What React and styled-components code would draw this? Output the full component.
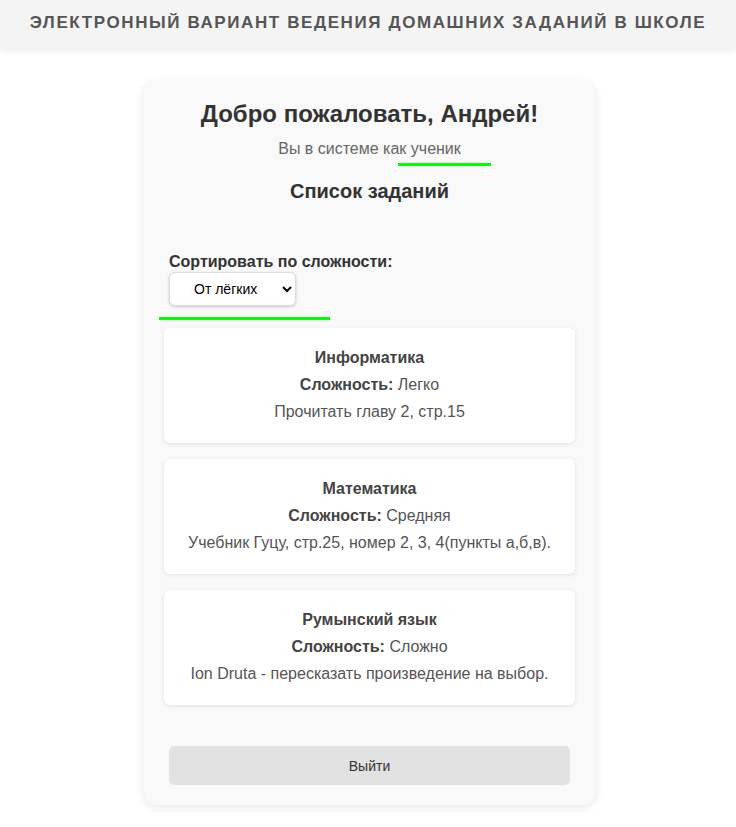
import React, { useState } from 'react';
import styled, { createGlobalStyle } from 'styled-components';

const tasks = [
  { subject: 'Информатика', level: 'Легко', text: 'Прочитать главу 2, стр.15' },
  { subject: 'Математика', level: 'Средняя', text: 'Учебник Гуцу, стр.25, номер 2, 3, 4(пункты а,б,в).' },
  { subject: 'Румынский язык', level: 'Сложно', text: 'Ion Druta - пересказать произведение на выбор.' },
];

const App = () => {
  const [order, setOrder] = useState('easy');

  return (
    <>
      <GlobalStyle />
      <Header>
        <HeaderTitle>Электронный вариант ведения домашних заданий в школе</HeaderTitle>
      </Header>
      <Main>
        <Panel>
          <Welcome>Добро пожаловать, Андрей!</Welcome>
          <Role>Вы в системе как ученик</Role>
          <ListTitle>Список заданий</ListTitle>
          <SortBox>
            <SortLabel htmlFor="sort">Сортировать по сложности:</SortLabel>
            <SortSelect id="sort" value={order} onChange={(e) => setOrder(e.target.value)}>
              <option value="easy">От лёгких</option>
              <option value="hard">От сложных</option>
            </SortSelect>
          </SortBox>
          <TaskList>
            {tasks.map((t) => (
              <TaskCard key={t.subject}>
                <TaskSubject>{t.subject}</TaskSubject>
                <TaskLine>
                  <b>Сложность:</b> {t.level}
                </TaskLine>
                <TaskLine>{t.text}</TaskLine>
              </TaskCard>
            ))}
          </TaskList>
          <LogoutButton>Выйти</LogoutButton>
          <Marker $left={254} $top={82} $width={93} />
          <Marker $left={15} $top={236} $width={171} />
        </Panel>
      </Main>
    </>
  );
};

export default App;

const GlobalStyle = createGlobalStyle`
  body {
    margin: 0;
    background: #fff;
    font-family: "Liberation Sans", Arial, sans-serif;
    color: #333;
  }
`;

const Header = styled.header`
  height: 49px;
  background: #f4f4f4;
  box-shadow: 0 2px 6px rgba(0, 0, 0, 0.08);
  display: flex;
  align-items: center;
  justify-content: center;
`;

const HeaderTitle = styled.h1`
  margin: 0 0 3px;
  font-size: 17px;
  font-weight: bold;
  text-transform: uppercase;
  letter-spacing: 1.6px;
  color: #555;
`;

const Main = styled.main`
  display: flex;
  justify-content: center;
  padding: 32px 0 20px 3px;
`;

const Panel = styled.section`
  position: relative;
  width: 451px;
  box-sizing: border-box;
  padding: 19px 20px 20px;
  background: #f9f9f9;
  border-radius: 12px;
  box-shadow: 0 2px 10px rgba(0, 0, 0, 0.1);
  display: flex;
  flex-direction: column;
`;

const Welcome = styled.h2`
  margin: 0;
  font-size: 24px;
  line-height: 28px;
  text-align: center;
  color: #333;
`;

const Role = styled.p`
  margin: 12px 0 0;
  font-size: 16px;
  line-height: 18px;
  text-align: center;
  color: #666;
`;

const ListTitle = styled.h3`
  margin: 22px 0 0;
  font-size: 20px;
  line-height: 23px;
  text-align: center;
  color: #333;
`;

const SortBox = styled.div`
  margin-top: 50px;
  padding: 0 5px;
  display: flex;
  flex-direction: column;
  align-items: flex-start;
`;

const SortLabel = styled.label`
  font-size: 16px;
  line-height: 18px;
  font-weight: bold;
  color: #333;
`;

const SortSelect = styled.select`
  margin-top: 1px;
  width: 127px;
  height: 34px;
  padding: 0 6px 0 20px;
  font-family: "Liberation Sans", Arial, sans-serif;
  font-size: 14px;
  color: #000;
  background: #fff;
  border: 1px solid #ddd;
  border-radius: 6px;
  box-shadow: 0 1px 3px rgba(0, 0, 0, 0.2);
`;

const TaskList = styled.div`
  margin-top: 22px;
  display: flex;
  flex-direction: column;
  gap: 16px;
`;

const TaskCard = styled.article`
  background: #fff;
  border-radius: 6px;
  box-shadow: 0 1px 4px rgba(0, 0, 0, 0.1);
  padding: 21px 10px 22px;
  display: flex;
  flex-direction: column;
  align-items: center;
  gap: 9px;
  text-align: center;
`;

const TaskSubject = styled.h4`
  margin: 0;
  font-size: 16px;
  line-height: 18px;
  font-weight: bold;
  color: #444;
`;

const TaskLine = styled.p`
  margin: 0;
  font-size: 16px;
  line-height: 18px;
  color: #555;

  b {
    color: #444;
  }
`;

const LogoutButton = styled.button`
  margin: 41px 5px 0;
  height: 39px;
  border: none;
  border-radius: 5px;
  background: #e2e2e2;
  font-family: "Liberation Sans", Arial, sans-serif;
  font-size: 14px;
  color: #333;
  cursor: pointer;
`;

const Marker = styled.span`
  position: absolute;
  left: ${(p) => p.$left}px;
  top: ${(p) => p.$top}px;
  width: ${(p) => p.$width}px;
  height: 3px;
  background: #00ff00;
`;
